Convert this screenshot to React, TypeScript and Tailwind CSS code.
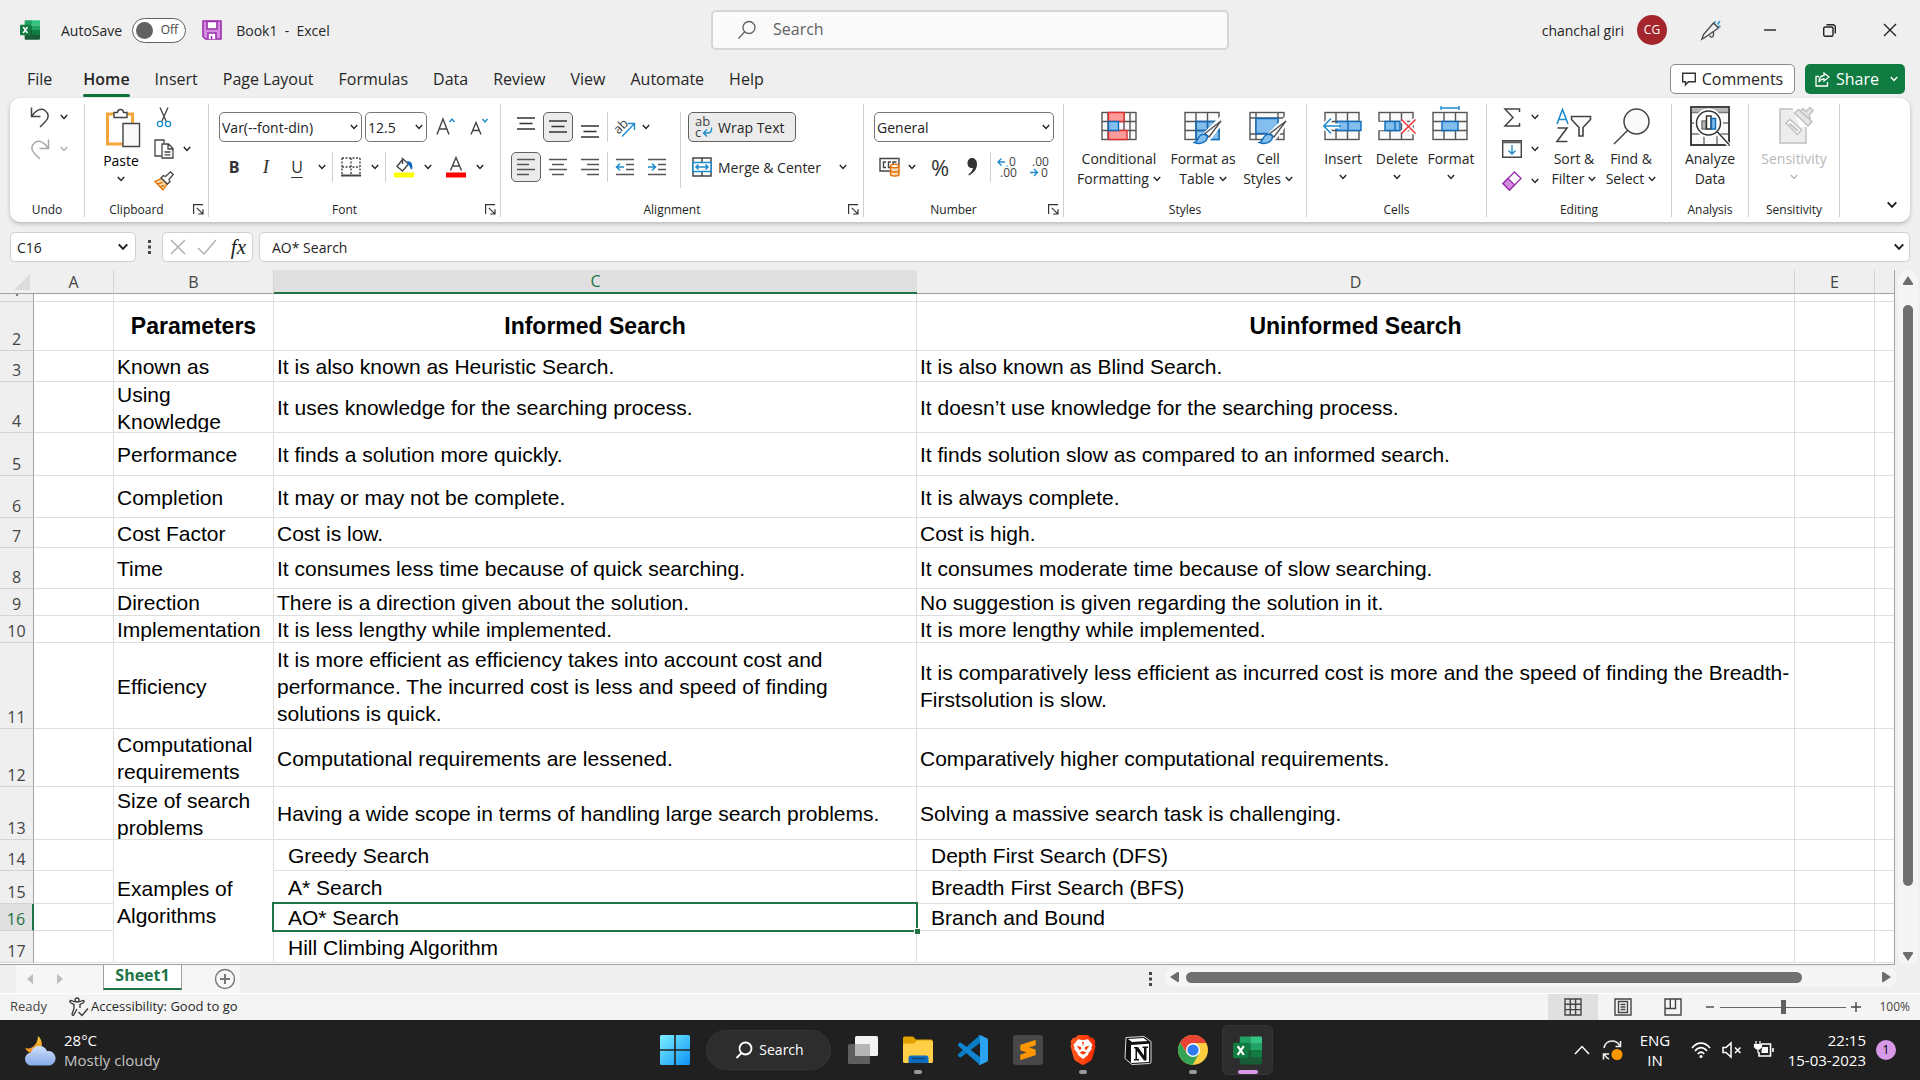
import React from 'react';
import { SiSublimetext } from 'react-icons/si';

type Kids = { children?: React.ReactNode };

const DARK = '#444444';
const BLUE = '#1e8bcd';

function Ic({ w, h, children, sw = 1.4, color = DARK }: { w: number; h: number; sw?: number; color?: string } & Kids) {
  return (
    <svg width={w} height={h} viewBox={`0 0 ${w} ${h}`} fill="none" stroke={color} strokeWidth={sw} className="shrink-0 overflow-visible" aria-hidden="true">
      {children}
    </svg>
  );
}

function Chevron({ color = '#222222', big = false }: { color?: string; big?: boolean }) {
  return (
    <svg width={big ? 12 : 8} height={big ? 8 : 6} viewBox="0 0 8 6" fill="none" stroke={color} strokeWidth={big ? 1.5 : 1.4} className="shrink-0" aria-hidden="true">
      <path d="M.8 1 4 4.4 7.2 1" />
    </svg>
  );
}

function Btn({ label, className = '', children }: { label: string; className?: string } & Kids) {
  return (
    <button type="button" aria-label={label} className={`flex shrink-0 items-center justify-center ${className}`}>
      {children}
    </button>
  );
}

function Drop({ label, color, className = 'w-5 h-[26px]' }: { label: string; color?: string; className?: string }) {
  return (
    <Btn label={label} className={className}>
      <Chevron color={color} />
    </Btn>
  );
}

function Sep({ className = 'h-[30px]' }: { className?: string }) {
  return <div className={`w-px shrink-0 bg-[#d0d0d0] ${className}`} />;
}

function Group({ name, className, launcher = false, children }: { name: string; className: string; launcher?: boolean } & Kids) {
  return (
    <section aria-label={name} className={`relative flex h-[113px] shrink-0 flex-col justify-between border-r border-[#d0d0d0] ${className}`}>
      {children}
      <div className={`h-3.5 text-center text-[12px] leading-[14px] text-[#222222] ${launcher ? 'pr-5' : ''}`}>{name}</div>
      {launcher && (
        <button type="button" aria-label={`${name} settings`} className="absolute right-1 bottom-0.5">
          <Ic w={11} h={11} color="#333333" sw={1.2}>
            <path d="M.6 10V.6H10M3.8 3.8l6 6M10 5.2V10H5.2" />
          </Ic>
        </button>
      )}
    </section>
  );
}

function Combo({ label, value, className }: { label: string; value: string; className: string }) {
  return (
    <div className={`relative h-[30px] shrink-0 ${className}`}>
      <select aria-label={label} className="h-full w-full appearance-none rounded-[5px] border border-[#767676] bg-white pl-0.5 text-[14px] text-[#222222]">
        <option>{value}</option>
      </select>
      <span className="pointer-events-none absolute inset-y-0 right-1 flex items-center">
        <Chevron />
      </span>
    </div>
  );
}

function Big({ icon, lines, chevron, color = '#262626', className, below = false }: { icon: React.ReactNode; lines: string[]; chevron?: boolean; color?: string; className: string; below?: boolean }) {
  return (
    <button type="button" className={`flex shrink-0 flex-col items-center text-[14px] leading-5 ${className}`} style={{ color }}>
      <span className="flex h-[45px] items-start pt-0.5">{icon}</span>
      {lines.map((l, i) => (
        <span key={l} className="flex items-center gap-1 whitespace-nowrap">
          {l}
          {chevron && !below && i === lines.length - 1 && <Chevron color={color} />}
        </span>
      ))}
      {below && (
        <span className="flex h-4 items-center">
          <Chevron color={color} />
        </span>
      )}
    </button>
  );
}

function ExcelIcon({ s }: { s: number }) {
  return (
    <svg width={s} height={s} viewBox="0 0 30 30" className="shrink-0" aria-hidden="true">
      <path d="M7 2a1.5 1.5 0 0 1 1.500-1.500H18v7.500H7z" fill="#21a366" />
      <path d="M18 .5h10.500A1.500 1.500 0 0 1 30 2v6H18z" fill="#33c481" />
      <path d="M7 8h11v7H7z" fill="#107c41" />
      <path d="M18 8h12v7H18z" fill="#21a366" />
      <path d="M18 15h12v7.500H18z" fill="#107c41" />
      <path d="M7 15h11v7.500h12V28a1.500 1.500 0 0 1-1.500 1.500h-20A1.500 1.500 0 0 1 7 28z" fill="#185c37" />
      <rect x="0" y="7" width="16" height="16" rx="1.500" fill="#107c41" />
      <path d="M4.800 10.500 11.200 19.500M11.200 10.500 4.800 19.500" stroke="#fff" strokeWidth="2.200" />
    </svg>
  );
}

function TitleBar() {
  return (
    <header className="grid h-[60px] shrink-0 grid-cols-[1fr_518px_1fr] items-center pl-5">
      <div className="flex items-center text-[14px] text-[#262626]">
        <ExcelIcon s={20} />
        <label htmlFor="autosave" className="ml-[21px]">AutoSave</label>
        <div className="relative ml-2.5 h-[25px] w-[54px]">
          <input id="autosave" type="checkbox" role="switch" className="h-full w-full appearance-none rounded-full border border-[#616161] bg-white" />
          <span className="pointer-events-none absolute top-1 left-1 h-[17px] w-[17px] rounded-full bg-[#616161]" />
          <span className="pointer-events-none absolute inset-y-0 right-2 flex items-center text-[12px] text-[#444444]">Off</span>
        </div>
        <Btn label="Save" className="ml-4">
          <Ic w={20} h={20} color="#9b2fae" sw={1.6}>
            <path d="M1 1h18v18H3.500L1 16.500z" fill="#d48fe0" />
            <path d="M5 1.500h10v7.500H5zM6 19v-6h8v6" fill="#fff" />
            <path d="M9.500 16v3" />
          </Ic>
        </Btn>
        <h1 className="ml-3.5 whitespace-pre">Book1&nbsp; -&nbsp; Excel</h1>
      </div>
      <div className="flex h-10 items-center gap-4 rounded-[5px] border-2 border-[#d6d6d6] bg-[#fafafa] pl-6">
        <Ic w={20} h={20} color="#616161" sw={1.3}>
          <circle cx="12" cy="7.500" r="6" />
          <path d="M7.800 11.800 1.500 18.500" />
        </Ic>
        <input aria-label="Search" placeholder="Search" className="mb-0.5 min-w-0 flex-1 bg-transparent text-[16px] outline-none placeholder:text-[#616161]" />
      </div>
      <div className="flex items-center justify-end pr-6 text-[#262626]">
        <span className="text-[14px]">chanchal giri</span>
        <span className="ml-[13px] flex size-[30px] items-center justify-center rounded-full bg-[#a4262c] text-[12px] text-white">CG</span>
        <Btn label="Coming soon" className="ml-[34px]">
          <Ic w={20} h={20} sw={1.3}>
            <path d="M12.500 3 17.500 8 4.500 17 .8 19.200 2.500 14.500zM8.500 15.500c1 2.500 3.800 2 4-.500v-3" />
            <path d="M14 1v2.500M16.500 4.500 19 1M17 6.500h2.500" stroke={BLUE} />
          </Ic>
        </Btn>
        <Btn label="Minimize" className="ml-[43px]">
          <Ic w={12} h={12} color="#222"><path d="M0 6h12" /></Ic>
        </Btn>
        <Btn label="Restore" className="ml-[47px]">
          <Ic w={13} h={13} color="#222">
            <rect x=".7" y="3" width="9.300" height="9.300" rx="1.500" />
            <path d="M3.500.7h6.300a2.500 2.500 0 0 1 2.500 2.500v6.300" />
          </Ic>
        </Btn>
        <Btn label="Close" className="ml-12">
          <Ic w={12} h={12} color="#222"><path d="m0 0 12 12M12 0 0 12" /></Ic>
        </Btn>
      </div>
    </header>
  );
}

const TABS = ['Insert', 'Page Layout', 'Formulas', 'Data', 'Review', 'View', 'Automate', 'Help'];

function Tabs() {
  return (
    <nav aria-label="Ribbon tabs" className="flex h-[38px] shrink-0 items-center justify-between pr-[15px] pl-[27px] text-[#262626]">
      <div className="flex items-center gap-[25px] text-[16px]">
        <button type="button" className="mr-1.5">File</button>
        <button type="button" className="relative flex h-9 items-center font-semibold">
          Home
          <span className="absolute inset-x-0 bottom-0 h-[3px] rounded-sm bg-[#0f703b]" />
        </button>
        {TABS.map((t) => (
          <button type="button" key={t}>{t}</button>
        ))}
      </div>
      <div className="flex gap-2.5 text-[16px]">
        <button type="button" className="flex h-[30px] w-[125px] items-center justify-center gap-1.5 rounded-[5px] border border-[#8a8a8a] bg-white">
          <Ic w={14} h={14} color="#333"><path d="M.7 1.200h12.600v8.500H6.500l-3 3v-3H.7z" /></Ic>
          Comments
        </button>
        <div className="flex h-[30px] rounded-[5px] bg-[#107c41] text-white">
          <button type="button" className="flex items-center gap-1.5 pl-2.5">
            <Ic w={15} h={15} color="#fff" sw={1.3}>
              <path d="M4 4.500H1v9.500h11.500v-4" />
              <path d="M9 1l5 4-5 4V6.800C6.500 6.800 5 8 4 10c0-4 2-6.300 5-6.500z" />
            </Ic>
            Share
          </button>
          <Drop label="Share options" color="#ffffff" className="ml-1 h-[30px] w-[22px]" />
        </div>
      </div>
    </nav>
  );
}

function Lines({ rows, color = '#555555' }: { rows: [number, number][]; color?: string }) {
  return (
    <Ic w={20} h={20} color={color} sw={1.5}>
      {rows.map(([x, w], i) => (
        <path key={i} d={`M${x} ${2.5 + i * 5}h${w}`} />
      ))}
    </Ic>
  );
}

function VLines({ dy }: { dy: number }) {
  return (
    <Ic w={20} h={30} color="#333333" sw={1.5}>
      <path d={`M1 ${dy}h18M3.500 ${dy + 5.5}h13M1 ${dy + 11}h18`} />
    </Ic>
  );
}

function TableGrid({ children, fill }: { fill?: React.ReactNode } & Kids) {
  return (
    <Ic w={40} h={40} color="#555555">
      <rect x="2" y="6.500" width="34" height="27" fill="#fafafa" />
      {fill}
      <path d="M2 15.500h34M2 24.500h34M13 6.500v27M24.500 6.500v27" />
      {children}
    </Ic>
  );
}

function Brush() {
  return (
    <>
      <path d="M37 14 22 29l3 4L38 16z" stroke="#fff" strokeWidth="5" />
      <path d="M38 15 26 31l-4-3.500z" fill="#fff" />
      <path d="M24.500 30c0 6-6.500 9-13 6.500 3.500-1 3-5.500 6.500-7.500 2.500-1.500 5-.5 6.500 1z" fill="#83beec" stroke="#0f6cbd" />
    </>
  );
}

function Ribbon() {
  return (
    <div className="mx-2.5 flex h-[124px] shrink-0 justify-between rounded-[10px] bg-white pt-1.5 shadow-[0_2px_4px_rgba(0,0,0,0.22)]">
      <div className="flex">
        <Group name="Undo" className="w-[75px]">
          <div className="ml-5 flex flex-col gap-1.5">
            <div className="flex">
              <Btn label="Undo" className="h-[26px]">
                <Ic w={20} h={22} sw={1.5}><path d="M1.500 1.500v9h9M2 10C6 4 11 1.500 15 4.500s4.500 7 0 11.500l-5 5" /></Ic>
              </Btn>
              <Drop label="Undo history" className="ml-1 h-[26px] w-5" />
            </div>
            <div className="flex">
              <Btn label="Redo" className="h-[26px]">
                <Ic w={20} h={22} sw={1.5} color="#a8a8a8"><path d="M18.500 1.500v9h-9M18 10C14 4 9 1.500 5 4.500S.5 11.500 5 16l5 5" /></Ic>
              </Btn>
              <Drop label="Redo history" color="#b0b0b0" className="ml-1 h-[26px] w-5" />
            </div>
          </div>
        </Group>

        <Group name="Clipboard" launcher className="w-[124px]">
          <div className="flex pl-4">
            <button type="button" className="flex w-10 flex-col items-center text-[14px] leading-5">
              <span className="flex h-[47px] items-start pt-1 pl-1">
                <Ic w={36} h={39}>
                  <path d="M2.500 6h25v30h-25z" fill="#fff" stroke="#f4a63a" strokeWidth="3" />
                  <path d="M9 9.500V4.500h3.500a3 3 0 0 1 6 0H22v5z" fill="#fff" />
                  <path d="M18 15.500h16.500v23H18z" fill="#fafafa" />
                </Ic>
              </span>
              Paste
              <span className="flex h-4 items-center"><Chevron /></span>
            </button>
            <div className="ml-3 flex flex-col gap-1.5">
              <Btn label="Cut" className="h-[26px] w-[22px]">
                <Ic w={16} h={21} sw={1.3}>
                  <path d="M4 .5 10.500 15M12 .5 5.500 15" />
                  <circle cx="4" cy="17" r="2.600" stroke={BLUE} />
                  <circle cx="12" cy="17" r="2.600" stroke={BLUE} />
                </Ic>
              </Btn>
              <div className="flex">
                <Btn label="Copy" className="h-[26px] w-[22px]">
                  <Ic w={20} h={20} sw={1.3}>
                    <path d="M7.500 17H1V1h9v3" />
                    <path d="M8 5h6.500l4.500 4.500V19H8zM14 5v5h5M10.500 13h6M10.500 15.800h6" fill="#fff" />
                  </Ic>
                </Btn>
                <Drop label="Copy options" className="ml-0.5 h-[26px] w-5" />
              </div>
              <Btn label="Format painter" className="h-[26px] w-[22px]">
                <Ic w={20} h={20} sw={1.3}>
                  <path d="M7.500 7.500 13 13l-4 6L1 10.500z" fill="#f8d9a8" stroke="#e07000" />
                  <path d="M3.500 12.500c2 .5 4-1 5-1M6 15.500c2 .5 3-1 4-1" stroke="#e07000" />
                  <path d="M7 7l2.500-2.500 2 1L16.500.8 19.200 3.500 15 8.500l1 2L13.500 13z" fill="#fff" />
                </Ic>
              </Btn>
            </div>
          </div>
        </Group>

        <Group name="Font" launcher className="w-[292px]">
          <div className="flex flex-col gap-2.5 pt-2">
            <div className="flex items-center gap-[3px] pl-2.5">
              <Combo label="Font" value="Var(--font-din)" className="w-[143px]" />
              <Combo label="Font size" value="12.5" className="w-[62px]" />
              <Btn label="Increase font size" className="ml-1 w-6">
                <Ic w={20} h={20}><path d="M1 17.500 7 2l6 15.500M3.200 12h7.600" /><path d="M13.500 5 16 2l2.500 3" stroke={BLUE} /></Ic>
              </Btn>
              <Btn label="Decrease font size" className="ml-1.5 w-6">
                <Ic w={20} h={20}><path d="M2 17.500 7 5.500l5 12M3.800 13.500h6.400" /><path d="M13.500 2 16 5l2.500-3" stroke={BLUE} /></Ic>
              </Btn>
            </div>
            <div className="flex items-center pl-[9px] text-[16px] text-[#333333]">
              <Btn label="Bold" className="h-[30px] w-8 font-bold">B</Btn>
              <Btn label="Italic" className="h-[30px] w-8 font-['Liberation_Serif'] text-[19px] italic">I</Btn>
              <Btn label="Underline" className="h-[30px] w-[30px] underline underline-offset-4">U</Btn>
              <Drop label="Underline options" />
              <Sep className="mr-1 h-[30px]" />
              <Btn label="Borders" className="w-7">
                <Ic w={20} h={20} sw={1.4}>
                  <path d="M1 1h18M1 10h18M1 1v16M10 1v16M19 1v16" strokeDasharray="2 1.500" />
                  <path d="M0 18.500h20" strokeWidth="2" />
                </Ic>
              </Btn>
              <Drop label="Border options" />
              <Sep className="mr-1 h-[30px]" />
              <Btn label="Fill colour" className="w-7">
                <Ic w={20} h={22} sw={1.4}>
                  <path d="M9 3 3 10.500l5.500 4.500L14.500 8 8.500 2.500V8" />
                  <path d="M14 6c3 0 4 2 3.500 7-1-3-1.500-4-3-5z" fill="#0f6cbd" stroke="#0f6cbd" />
                  <path d="M0 19h20" stroke="#ffff00" strokeWidth="5" />
                </Ic>
              </Btn>
              <Drop label="Fill options" />
              <Btn label="Font colour" className="ml-1 w-7">
                <Ic w={20} h={22} sw={1.4}>
                  <path d="M4.500 14.500 10 1.500l5.500 13M6.500 10h7" />
                  <path d="M0 19h20" stroke="#ff0000" strokeWidth="5" />
                </Ic>
              </Btn>
              <Drop label="Font colour options" />
            </div>
          </div>
        </Group>

        <Group name="Alignment" launcher className="w-[363px]">
          <div className="flex pt-2 pl-2.5">
            <div className="flex flex-col gap-2.5">
              <div className="flex gap-0.5">
                <Btn label="Top align" className="h-[30px] w-[30px]"><VLines dy={6} /></Btn>
                <Btn label="Middle align" className="h-[30px] w-[30px] rounded-[5px] border border-[#616161] bg-[#ebebeb]"><VLines dy={9} /></Btn>
                <Btn label="Bottom align" className="h-[30px] w-[30px]"><VLines dy={14} /></Btn>
                <Sep />
                <Btn label="Orientation" className="h-[30px] w-[30px]">
                  <Ic w={21} h={21} sw={1.4}>
                    <text x="-1" y="13" fontSize="13" fontFamily="Open Sans" fill={DARK} stroke="none" transform="rotate(-45 7 10)">ab</text>
                    <path d="M7 19.500 19 7M13 6.500h6.500V13" stroke={BLUE} />
                  </Ic>
                </Btn>
                <Drop label="Orientation options" className="h-[30px] w-2" />
              </div>
              <div className="flex gap-0.5">
                <Btn label="Align left" className="h-[30px] w-[30px] rounded-[5px] border border-[#616161] bg-[#ebebeb]"><Lines rows={[[1, 18], [1, 12], [1, 18], [1, 12]]} /></Btn>
                <Btn label="Align centre" className="h-[30px] w-[30px]"><Lines rows={[[1, 18], [4, 12], [1, 18], [4, 12]]} /></Btn>
                <Btn label="Align right" className="h-[30px] w-[30px]"><Lines rows={[[1, 18], [7, 12], [1, 18], [7, 12]]} /></Btn>
                <Sep />
                <Btn label="Decrease indent" className="h-[30px] w-[30px]">
                  <Ic w={20} h={20} sw={1.5}>
                    <path d="M1 2.500h18M11 7.500h8M11 12.500h8M1 17.500h18" stroke="#555" />
                    <path d="M9 10H1.500M5 6.500 1.500 10 5 13.500" stroke={BLUE} />
                  </Ic>
                </Btn>
                <Btn label="Increase indent" className="h-[30px] w-[30px]">
                  <Ic w={20} h={20} sw={1.5}>
                    <path d="M1 2.500h18M11 7.500h8M11 12.500h8M1 17.500h18" stroke="#555" />
                    <path d="M1 10h7.500M5 6.500 8.500 10 5 13.500" stroke={BLUE} />
                  </Ic>
                </Btn>
              </div>
            </div>
            <Sep className="ml-2 h-[76px]" />
            <div className="ml-[7px] flex flex-col gap-2.5 text-[14px] text-[#262626]">
              <button type="button" className="flex h-[30px] w-[108px] items-center gap-1 rounded-[5px] border border-[#616161] bg-[#ebebeb] pl-1.5 whitespace-nowrap">
                <Ic w={19} h={22}>
                  <text x="0" y="10" fontSize="13" fontFamily="Open Sans" fill={DARK} stroke="none">ab</text>
                  <text x="0" y="21" fontSize="13" fontFamily="Open Sans" fill={DARK} stroke="none">c</text>
                  <path d="M16.500 11.500c.5 4-1 5.500-4 5.500H8.500M12 13.500 8.500 17l3.500 3.500" stroke={BLUE} />
                </Ic>
                Wrap Text
              </button>
              <div className="flex items-center">
                <button type="button" className="flex h-[30px] items-center gap-1.5 pl-1 whitespace-nowrap">
                  <Ic w={20} h={20} sw={1.5}>
                    <path d="M1 1h18v18H1zM10 1v4M10 15v4" />
                    <path d="M1 5.500h18v9H1z" fill="#fff" stroke={BLUE} />
                    <path d="M4 10h12M6.500 7.500 4 10l2.500 2.500M13.500 7.500 16 10l-2.500 2.500" stroke={BLUE} />
                  </Ic>
                  Merge &amp; Center
                </button>
                <Drop label="Merge options" className="ml-3 h-[30px] w-5" />
              </div>
            </div>
          </div>
        </Group>

        <Group name="Number" launcher className="w-[200px]">
          <div className="flex flex-col gap-2.5 pt-2 pl-2.5">
            <Combo label="Number format" value="General" className="w-[180px]" />
            <div className="flex items-center text-[#333333]">
              <Btn label="Accounting format" className="h-[30px] w-8">
                <Ic w={22} h={20}>
                  <path d="M11 14H1V1.500h19V8M7 5H4.500v5.500H7M12 5H9.500v5.500h1.500M14 8V5h3.500" />
                  <path d="M11.500 9v8.500c0 2 8.500 2 8.500 0V9" fill="#fbd9b5" stroke="#e07000" />
                  <ellipse cx="15.800" cy="9" rx="4.200" ry="1.800" fill="#fff" stroke="#e07000" />
                  <path d="M11.500 13.500c0 2 8.500 2 8.500 0" stroke="#e07000" />
                </Ic>
              </Btn>
              <Drop label="Accounting options" className="h-[30px] w-3" />
              <Btn label="Percent" className="ml-1.5 h-[30px] w-8 text-[22px]">%</Btn>
              <Btn label="Comma style" className="h-[30px] w-8">
                <svg width="12" height="18" viewBox="0 0 12 18" aria-hidden="true"><path d="M6 0c3 0 5 2.500 5 6 0 5-3 9-8 11.500l-.7-1C5 14.500 6.500 12.500 7 10 3.500 10.500 1.500 8 1.500 5.200 1.500 2 3.500 0 6 0z" fill="#333" /></svg>
              </Btn>
              <Sep className="ml-0.5 h-[30px]" />
              <Btn label="Increase decimal" className="h-[30px] w-8">
                <Ic w={20} h={22}>
                  <text x="12" y="10" fontSize="12" fontFamily="Open Sans" fill={DARK} stroke="none">0</text>
                  <text x="3" y="21" fontSize="12" fontFamily="Open Sans" fill={DARK} stroke="none">.00</text>
                  <path d="M8 6H1M4.500 2.500 1 6l3.500 3.500M10 9.500v1" stroke={BLUE} />
                </Ic>
              </Btn>
              <Btn label="Decrease decimal" className="h-[30px] w-8">
                <Ic w={20} h={22}>
                  <text x="3" y="10" fontSize="12" fontFamily="Open Sans" fill={DARK} stroke="none">.00</text>
                  <text x="12" y="21" fontSize="12" fontFamily="Open Sans" fill={DARK} stroke="none">0</text>
                  <path d="M1 16.500h7.500M5 13l3.500 3.500L5 20" stroke={BLUE} />
                </Ic>
              </Btn>
            </div>
          </div>
        </Group>

        <Group name="Styles" className="w-[243px]">
          <div className="flex pl-2.5">
            <Big className="w-[90px]" lines={['Conditional', 'Formatting']} chevron icon={
              <Ic w={40} h={40} color="#555555">
                <rect x="3" y="6.500" width="34" height="27" fill="#fafafa" />
                <path d="M3 15.500h34M3 24.500h34M9 6.500v27M31 6.500v27M25 6.500v27" />
                <path d="M9.500 6.500H25v9H9.500zM9.500 24.500H28v9H9.500z" fill="#ff9a9a" stroke="#e03030" />
                <path d="M9.500 15.500h10v9h-10z" fill="#83beec" stroke="#0f6cbd" />
              </Ic>
            } />
            <Big className="w-[78px]" lines={['Format as', 'Table']} chevron icon={
              <TableGrid fill={<path d="M13 15.500h23v18H13z" fill="#83beec" stroke="none" />}>
                <path d="M13 15.500h23v18H13zM24.500 15.500v18M13 24.500h23" stroke="#0f6cbd" />
                <Brush />
              </TableGrid>
            } />
            <Big className="w-[52px]" lines={['Cell', 'Styles']} chevron icon={
              <Ic w={40} h={40} color="#555555">
                <rect x="2" y="6.500" width="34" height="27" fill="#fafafa" />
                <path d="M2 12h34M2 28h34M8 6.500v27M30 6.500v27" />
                <path d="M8 12.500h22v15H8z" fill="#83beec" stroke="#0f6cbd" />
                <Brush />
              </Ic>
            } />
          </div>
        </Group>

        <Group name="Cells" className="w-[180px]">
          <div className="flex pl-[9px]">
            <Big className="w-[54px]" lines={['Insert']} chevron below icon={
              <TableGrid>
                <path d="M14 15.500h24v9H14z" fill="#83beec" stroke="#0f6cbd" />
                <path d="M25 15.500v9" stroke="#0f6cbd" />
                <path d="M16 20H1M8 12.500.8 20 8 27.500" stroke="#fff" strokeWidth="5" />
                <path d="M18 20H1M8 12.500.8 20 8 27.500" stroke={BLUE} strokeWidth="1.600" />
              </TableGrid>
            } />
            <Big className="w-[54px]" lines={['Delete']} chevron below icon={
              <TableGrid>
                <path d="M1 16.500h6v7H1z" fill="#fff" stroke="#fff" />
                <path d="M8 15.500h15v9H8z" fill="#83beec" stroke="#0f6cbd" />
                <path d="M18 15.500v9" stroke="#0f6cbd" />
                <path d="m25 14 13 13M38 14 25 27" stroke="#fff" strokeWidth="5" />
                <path d="m24.500 13.500 14 14M38.500 13.500l-14 14" stroke="#ee3b3b" strokeWidth="1.600" />
              </TableGrid>
            } />
            <Big className="w-[54px]" lines={['Format']} chevron below icon={
              <TableGrid>
                <path d="M11 15.500h16v9H11z" fill="#83beec" stroke="#0f6cbd" />
                <path d="M10 2h18M10 0v4M28 0v4" stroke={BLUE} />
              </TableGrid>
            } />
          </div>
        </Group>

        <Group name="Editing" className="w-[185px]">
          <div className="flex pl-[15px]">
            <div className="flex flex-col gap-1.5">
              <div className="flex">
                <Btn label="AutoSum" className="h-[26px] w-5"><Ic w={18} h={19} sw={1.5}><path d="M16.500 4V1H2l8 8.500-8 8.500h14.500v-3" /></Ic></Btn>
                <Drop label="AutoSum options" className="ml-[3px] h-[26px] w-5" />
              </div>
              <div className="flex">
                <Btn label="Fill" className="h-[26px] w-5"><Ic w={20} h={18}><path d="M.7.7h18.600v16.600H.7z" fill="#fff" /><path d="M.7 2h18.600" strokeWidth="2.600" stroke="#666" /><path d="M10 5v9M6.500 10.500 10 14l3.500-3.500" stroke={BLUE} /></Ic></Btn>
                <Drop label="Fill series options" className="ml-[3px] h-[26px] w-5" />
              </div>
              <div className="flex">
                <Btn label="Clear" className="h-[26px] w-5">
                  <Ic w={20} h={20} color="#9b2fae">
                    <path d="M12.500 1 19 7.500 7.500 19 1 12.500z" fill="#fff" />
                    <path d="M6 7.500 12.500 14l-5 5L1 12.500z" fill="#d48fe0" />
                  </Ic>
                </Btn>
                <Drop label="Clear options" className="ml-[3px] h-[26px] w-5" />
              </div>
            </div>
            <Big className="ml-px w-14" lines={['Sort &', 'Filter']} chevron icon={
              <Ic w={38} h={40} sw={1.6}>
                <path d="M2 18 7.500 3.500 13 18M4 13.500h7" stroke={BLUE} />
                <path d="M2.500 22H12L2 35.500h10.500" />
                <path d="M16.500 10.500h19v3L28 21.500v8.500h-4v-8.500l-7.500-8z" fill="#fafafa" />
              </Ic>
            } />
            <Big className="w-[58px]" lines={['Find &', 'Select']} chevron icon={
              <Ic w={40} h={40} sw={1.5}>
                <circle cx="25.500" cy="15.500" r="12.500" fill="#fafafa" />
                <path d="M16.500 24.500 3 38" />
              </Ic>
            } />
          </div>
        </Group>

        <Group name="Analysis" className="w-[77px]">
          <div className="flex justify-center">
            <Big className="w-16" lines={['Analyze', 'Data']} icon={
              <Ic w={40} h={40} sw={1.5} color="#333333">
                <rect x="1" y="1" width="38" height="38" fill="#fafafa" />
                <path d="M1 4h38" strokeWidth="5" stroke="#b8b8b8" />
                <path d="M1 6.500h38M1 17h38M1 28h38M14 28v11M27 28v11" stroke="#777" />
                <rect x="1" y="1" width="38" height="38" />
                <path d="M27 27 39 39" stroke="#fff" strokeWidth="4" />
                <circle cx="18.500" cy="17" r="12" fill="#fff" stroke="#fff" strokeWidth="5" />
                <circle cx="18.500" cy="17" r="12" />
                <path d="M27 25.500 39 38.500" />
                <path d="M12 15h4v8h-4z" fill="#b8b8b8" stroke="#777" />
                <path d="M16.500 10H21v13h-4.500z" fill="#fff" />
                <path d="M21.500 12.500h4V23h-4z" fill="#83beec" stroke="#0f6cbd" />
              </Ic>
            } />
          </div>
        </Group>

        <Group name="Sensitivity" className="w-[91px]">
          <div className="flex justify-center">
            <Big className="w-[78px]" lines={['Sensitivity']} chevron below color="#b8b8b8" icon={
              <Ic w={40} h={40} color="#c0c0c0" sw={1.5}>
                <path d="M6 3h26v34H6z" fill="#ededed" />
                <path d="M18 1h22v20H26z" fill="#fff" stroke="none" />
                <path d="m12 17 4-3.500 11.500 10.500-4 4.500z" fill="#fff" />
                <path d="m15.500 17.500 8.500 7.500" strokeWidth="2" />
                <path d="m20.500 7 4-3.500 13.500 12-4 4.500zM26 5.500l3-3 3 3 4-4 3 3-4 5 1.500 3.500" fill="#e4e4e4" />
              </Ic>
            } />
          </div>
        </Group>
      </div>
      <Btn label="Collapse ribbon" className="mr-3 mb-[13px] self-end"><Chevron big /></Btn>
    </div>
  );
}

function Dots() {
  return (
    <svg width="3" height="14" viewBox="0 0 3 14" className="shrink-0" aria-hidden="true"><path d="M0 0h3v3H0zM0 5.500h3v3H0zM0 11h3v3H0z" fill="#444" /></svg>
  );
}

function FormulaBar() {
  const box = 'flex h-[30px] items-center rounded-[5px] border border-[#d0d0d0] bg-white';
  return (
    <div className="mx-2.5 mt-2.5 mb-2 flex shrink-0 items-center text-[14px] text-[#222222]">
      <div className={`${box} w-[126px] pr-1.5 pl-1.5`}>
        <input aria-label="Name box" defaultValue="C16" className="min-w-0 flex-1 outline-none" />
        <Btn label="Name list"><Chevron big /></Btn>
      </div>
      <div className="flex w-[26px] justify-center"><Dots /></div>
      <div className={`${box} w-[91px] justify-between pr-1.5 pl-2`}>
        <Btn label="Cancel"><Ic w={15} h={16} color="#b0b0b0" sw={1.5}><path d="m0 1 14 14M14 1 0 15" /></Ic></Btn>
        <Btn label="Enter"><Ic w={20} h={16} color="#b0b0b0" sw={1.5}><path d="m0 9 6 6L18 1" /></Ic></Btn>
        <Btn label="Insert function" className="font-['Liberation_Serif'] text-[21px] leading-none font-bold italic"><span className="font-normal">fx</span></Btn>
      </div>
      <div className={`${box} ml-1.5 flex-1 pr-1 pl-3`}>
        <input aria-label="Formula bar" defaultValue="AO* Search" className="min-w-0 flex-1 outline-none" />
        <Btn label="Expand formula bar"><Chevron big /></Btn>
      </div>
    </div>
  );
}

type Row = { n: number; h: string; b?: string; c?: string; d?: string };

const ROWS: Row[] = [
  { n: 1, h: 'h-[7px]' },
  { n: 2, h: 'h-[48px]', b: 'Parameters', c: 'Informed Search', d: 'Uninformed Search' },
  { n: 3, h: 'h-[30px]', b: 'Known as', c: 'It is also known as Heuristic Search.', d: 'It is also known as Blind Search.' },
  { n: 4, h: 'h-[50px]', b: 'Using\nKnowledge', c: 'It uses knowledge for the searching process.', d: 'It doesn’t use knowledge for the searching process.' },
  { n: 5, h: 'h-[42px]', b: 'Performance', c: 'It finds a solution more quickly.', d: 'It finds solution slow as compared to an informed search.' },
  { n: 6, h: 'h-[41px]', b: 'Completion', c: 'It may or may not be complete.', d: 'It is always complete.' },
  { n: 7, h: 'h-[29px]', b: 'Cost Factor', c: 'Cost is low.', d: 'Cost is high.' },
  { n: 8, h: 'h-[40px]', b: 'Time', c: 'It consumes less time because of quick searching.', d: 'It consumes moderate time because of slow searching.' },
  { n: 9, h: 'h-[26px]', b: 'Direction', c: 'There is a direction given about the solution.', d: 'No suggestion is given regarding the solution in it.' },
  { n: 10, h: 'h-[26px]', b: 'Implementation', c: 'It is less lengthy while implemented.', d: 'It is more lengthy while implemented.' },
  { n: 11, h: 'h-[85px]', b: 'Efficiency', c: 'It is more efficient as efficiency takes into account cost and\nperformance. The incurred cost is less and speed of finding\nsolutions is quick.', d: 'It is comparatively less efficient as incurred cost is more and the speed of finding the Breadth-\nFirstsolution is slow.' },
  { n: 12, h: 'h-[57px]', b: 'Computational\nrequirements', c: 'Computational requirements are lessened.', d: 'Comparatively higher computational requirements.' },
  { n: 13, h: 'h-[52px]', b: 'Size of search\nproblems', c: 'Having a wide scope in terms of handling large search problems.', d: 'Solving a massive search task is challenging.' },
  { n: 14, h: 'h-[30px]', b: 'Examples of\nAlgorithms', c: 'Greedy Search', d: 'Depth First Search (DFS)' },
  { n: 15, h: 'h-[32px]', c: 'A* Search', d: 'Breadth First Search (BFS)' },
  { n: 16, h: 'h-[26px]', c: 'AO* Search', d: 'Branch and Bound' },
  { n: 17, h: 'h-[31px]', c: 'Hill Climbing Algorithm' },
];

const CELL = 'border-r border-b border-[#dedede] p-0';

function Cell({ row, text = '' }: { row: Row; text?: string }) {
  const head = row.n === 2;
  const look = head ? 'justify-center text-[23px] font-bold' : row.n > 13 ? 'pl-3.5' : 'pl-[3px]';
  return <div className={`flex items-center overflow-hidden pt-px whitespace-pre ${row.h} ${look}`}>{text}</div>;
}

function Grid() {
  return (
    <div className="flex min-h-0 flex-1">
      <div className="min-w-0 flex-1 overflow-hidden border-r border-b border-[#a0a0a0] bg-white">
        <table className="w-full table-fixed border-separate border-spacing-0 font-['Liberation_Sans',sans-serif] text-[21px] leading-[27px] text-black">
          <colgroup>
            <col className="w-[34px]" />
            <col className="w-20" />
            <col className="w-40" />
            <col className="w-[643px]" />
            <col className="w-[878px]" />
            <col className="w-20" />
            <col />
          </colgroup>
          <thead>
            <tr className="h-6 font-['Open_Sans',sans-serif] text-[16px] leading-5 text-[#444444]">
              <th aria-label="Select all" className="border-b border-[#a0a0a0] bg-[#efefef] p-0">
                <svg width="16" height="16" viewBox="0 0 16 16" className="ml-3.5" aria-hidden="true"><path d="M16 0v16H0z" fill="#dcdcdc" /></svg>
              </th>
              {['A', 'B', 'C', 'D', 'E', ''].map((c) => (
                <th key={c} scope="col" className={`p-0 font-normal ${c === 'C' ? 'border-b-2 border-[#217346] bg-[#e0e0e0] text-[#217346]' : c === '' ? 'border-b border-b-[#a0a0a0] bg-[#efefef]' : 'border-r border-b border-r-[#d4d4d4] border-b-[#a0a0a0] bg-[#efefef]'}`}>
                  {c}
                </th>
              ))}
            </tr>
          </thead>
          <tbody>
            {ROWS.map((r) => {
              const sel = r.n === 16;
              return (
                <tr key={r.n}>
                  <th scope="row" className={`border-b border-b-[#d4d4d4] p-0 font-['Open_Sans',sans-serif] text-[16px] leading-5 font-normal ${sel ? 'border-r-2 border-r-[#217346] bg-[#e0e0e0] text-[#217346]' : 'border-r border-r-[#a0a0a0] bg-[#efefef] text-[#444444]'}`}>
                    <div className={`flex items-end justify-center overflow-hidden pb-px ${r.h}`}>{r.n}</div>
                  </th>
                  <td className={CELL} />
                  {r.n <= 13 && <td className={CELL}><Cell row={r} text={r.b} /></td>}
                  {r.n === 14 && <td rowSpan={4} className="border-r border-b border-[#dedede] p-0 pt-0.5 pl-[3px] whitespace-pre">{r.b}</td>}
                  <td className={`${CELL} ${sel ? 'relative' : ''}`}>
                    <Cell row={r} text={r.c} />
                    {sel && (
                      <div className="pointer-events-none absolute -inset-0.5 border-2 border-[#217346]">
                        <span className="absolute -right-1 -bottom-1 size-1.5 border-t border-l border-white bg-[#217346]" />
                      </div>
                    )}
                  </td>
                  <td className={CELL}><Cell row={r} text={r.d} /></td>
                  <td className={CELL} />
                  <td className="border-b border-[#dedede] p-0" />
                </tr>
              );
            })}
          </tbody>
        </table>
      </div>
      <div className="mr-0.5 ml-[3px] flex w-5 flex-col items-center rounded-full bg-[#f5f5f5] pt-1.5 pb-1">
        <Btn label="Scroll up"><svg width="12" height="9" viewBox="0 0 12 9" aria-hidden="true"><path d="M6 0l5 7.500q.5 1.500-1 1.500H2Q.5 9 1 7.500z" fill="#6e6e6e" /></svg></Btn>
        <div className="mt-5 w-2.5 grow-[580] basis-0 rounded-full bg-[#707070]" />
        <div className="grow-[66] basis-0" />
        <Btn label="Scroll down"><svg width="12" height="9" viewBox="0 0 12 9" aria-hidden="true"><path d="M6 9l5-7.500Q11.500 0 10 0H2Q.5 0 1 1.500z" fill="#6e6e6e" /></svg></Btn>
      </div>
    </div>
  );
}

function SheetTabs() {
  return (
    <div className="flex h-7 shrink-0 justify-between pr-[23px] pl-4">
      <div className="flex w-56 items-start bg-[#f6f6f6]">
        <div className="ml-[11px] flex h-7 w-[76px] items-center gap-6">
          <Btn label="Previous sheet"><svg width="6" height="10" viewBox="0 0 6 10" aria-hidden="true"><path d="M6 0v10L0 5z" fill="#bdbdbd" /></svg></Btn>
          <Btn label="Next sheet"><svg width="6" height="10" viewBox="0 0 6 10" aria-hidden="true"><path d="M0 0v10l6-5z" fill="#bdbdbd" /></svg></Btn>
        </div>
        <button type="button" className="flex h-[25px] w-[79px] items-center justify-center border-x border-b-2 border-x-[#a0a0a0] border-b-[#217346] bg-white pb-1 text-[16px] leading-5 font-bold text-[#217346]">Sheet1</button>
        <Btn label="New sheet" className="ml-8 h-7">
          <Ic w={22} h={22} color="#777" sw={1.4}><circle cx="11" cy="11" r="9.500" /><path d="M11 6v10M6 11h10" strokeWidth="2" /></Ic>
        </Btn>
      </div>
      <div className="flex w-[748px] items-center">
        <Dots />
        <div className="mt-0.5 ml-3 flex h-5 flex-1 items-center self-start rounded-full bg-[#f5f5f5] pr-1.5 pl-1.5">
          <Btn label="Scroll left"><svg width="9" height="12" viewBox="0 0 9 12" aria-hidden="true"><path d="M0 6l7.500-5Q9 .5 9 2v8q0 1.500-1.500 1z" fill="#6e6e6e" /></svg></Btn>
          <div className="ml-[7px] h-[11px] grow-[616] basis-0 rounded-full bg-[#707070]" />
          <div className="grow-[80] basis-0" />
          <Btn label="Scroll right"><svg width="9" height="12" viewBox="0 0 9 12" aria-hidden="true"><path d="M9 6 1.500 1Q0 .5 0 2v8q0 1.500 1.500 1z" fill="#6e6e6e" /></svg></Btn>
        </div>
      </div>
    </div>
  );
}

function StatusBar() {
  return (
    <footer className="flex h-[27px] shrink-0 items-center justify-between border-t border-white bg-[#f4f4f4] pr-2.5 pl-2.5 text-[13px] text-[#444444]">
      <div className="flex items-center">
        <span>Ready</span>
        <button type="button" className="ml-[22px] flex items-center gap-0.5 text-[#262626]">
          <Ic w={20} h={20} color="#333" sw={1.3}>
            <circle cx="8" cy="3" r="2" />
            <path d="M6 5 2 3.500C.5 3.500.5 5.500 2 6l3 1.500v4L3 17c0 1.500 1.500 1.800 2 .5L8 12M10 5l4-1.500c1.500 0 1.500 2 0 2.500l-3 1.500V11" />
            <path d="m9.500 15 3.500 3.500 6-7" />
          </Ic>
          Accessibility: Good to go
        </button>
      </div>
      <div className="flex items-center">
        <Btn label="Normal view" className="h-[26px] w-[50px] bg-[#e0e0e0]"><Ic w={18} h={18}><path d="M1 1h16v16H1zM1 6.300h16M1 11.600h16M6.300 1v16M11.600 1v16" /></Ic></Btn>
        <Btn label="Page layout view" className="h-[26px] w-[50px]"><Ic w={18} h={18}><path d="M1 1h16v16H1zM4.500 3.500h9v11h-9zM6.500 6.500h5M6.500 9h5M6.500 11.500h5" /></Ic></Btn>
        <Btn label="Page break view" className="h-[26px] w-[50px]"><Ic w={18} h={18}><path d="M1 1h16v16H1zM1 10.500h10.500V1M6.300 1v9.500" /></Ic></Btn>
        <Btn label="Zoom out" className="ml-1.5 w-3"><Ic w={10} h={10}><path d="M1 5h8" /></Ic></Btn>
        <input
          type="range"
          aria-label="Zoom"
          min={0}
          max={100}
          defaultValue={50}
          className="mx-1 h-4 w-[126px] appearance-none bg-[linear-gradient(#666,#666)] bg-[length:100%_1px] bg-center bg-no-repeat [&::-webkit-slider-thumb]:h-3.5 [&::-webkit-slider-thumb]:w-[5px] [&::-webkit-slider-thumb]:appearance-none [&::-webkit-slider-thumb]:bg-[#616161]"
        />
        <Btn label="Zoom in" className="w-3"><Ic w={10} h={10}><path d="M0 5h10M5 0v10" /></Ic></Btn>
        <span className="ml-4 w-8 text-right text-[12px]">100%</span>
      </div>
    </footer>
  );
}

function Task({ label, children, dot, active }: { label: string; dot?: boolean; active?: boolean } & Kids) {
  return (
    <button type="button" aria-label={label} className="relative flex h-[60px] w-[55px] items-center justify-center">
      {active && <span className="absolute inset-x-0.5 inset-y-[5px] rounded-md border border-[#363636] bg-[#2d2d2d]" />}
      <span className="relative">{children}</span>
      {dot && <span className="absolute bottom-1.5 h-1 w-2 rounded-full bg-[#9a9a9a]" />}
      {active && <span className="absolute bottom-1.5 h-1 w-5 rounded-full bg-[#d89ae8]" />}
    </button>
  );
}

function Taskbar() {
  return (
    <div className="grid h-[60px] shrink-0 grid-cols-[1fr_auto_1fr] items-center bg-[#202020] pl-0.5 text-[15px] leading-5 text-white">
      <button type="button" className="flex items-center gap-[7px] pl-[22px] text-left">
        <svg width="33" height="33" viewBox="0 0 33 33" aria-hidden="true">
          <defs>
            <linearGradient id="moon" x1="0" y1="0" x2="0" y2="1"><stop offset="0" stopColor="#f9c83f" /><stop offset="1" stopColor="#f08a1c" /></linearGradient>
            <linearGradient id="cloud" x1="0" y1="0" x2="0" y2="1"><stop offset="0" stopColor="#cfe0fb" /><stop offset="1" stopColor="#86a9e8" /></linearGradient>
          </defs>
          <path d="M14 2c6 5 5 15-3 17C6 20 2 17 1.500 14 8 16 14 10 14 2z" fill="url(#moon)" />
          <path d="M8 31.500a6.500 6.500 0 0 1-1-13A8.500 8.500 0 0 1 23 17a7.300 7.300 0 1 1 2.500 14.500z" fill="url(#cloud)" />
        </svg>
        <span>
          <span className="block">28°C</span>
          <span className="block text-[#c4c4c4]">Mostly cloudy</span>
        </span>
      </button>
      <div className="flex items-center">
        <Task label="Start">
          <svg width="30" height="30" viewBox="0 0 30 30" aria-hidden="true">
            <defs><linearGradient id="win" x1="0" y1="0" x2="1" y2="1"><stop offset="0" stopColor="#7ff0ff" /><stop offset="1" stopColor="#0a93f5" /></linearGradient></defs>
            <path d="M0 1.500Q0 0 1.500 0h12.700v14.200H0zM15.800 0h12.700Q30 0 30 1.500v12.700H15.800zM0 15.800h14.200V30H1.500Q0 30 0 28.500zM15.800 15.800H30v12.700q0 1.500-1.500 1.500H15.800z" fill="url(#win)" />
          </svg>
        </Task>
        <button type="button" className="mx-1 flex h-10 w-[125px] items-center justify-center gap-1.5 rounded-full border border-[#363636] bg-[#2d2d2d] pl-0.5 text-[14px]">
          <Ic w={18} h={18} color="#fff" sw={1.8}><circle cx="10.500" cy="7.500" r="6" /><path d="M6.500 12 1.500 17" /></Ic>
          Search
        </button>
        <Task label="Task view">
          <svg width="30" height="30" viewBox="0 0 30 30" aria-hidden="true">
            <rect x="0" y="9" width="22" height="20" rx="1.500" fill="#5f5f5f" />
            <rect x="7" y="1" width="23" height="20" rx="1.500" fill="#f2f2f2" />
            <path d="M7 9h15v12H8.500Q7 21 7 19.500z" fill="#b5b5b5" />
          </svg>
        </Task>
        <Task label="File Explorer" dot>
          <svg width="30" height="28" viewBox="0 0 30 28" aria-hidden="true">
            <path d="M0 2Q0 .5 1.500.5h8.500l3 3h15q1.500 0 1.500 1.500v7H0z" fill="#e0a200" />
            <path d="M0 7.500h11l3-3h14.500Q30 4.500 30 6v19.500q0 1.500-1.500 1.500h-27Q0 27 0 25.500z" fill="#ffcf48" />
            <path d="M5.500 27v-5q0-2.500 2.500-2.500h15q2.500 0 2.500 2.500v5z" fill="#0c6cbd" />
            <path d="M9 22.500h13" stroke="#0a3f73" strokeWidth="1.200" />
          </svg>
        </Task>
        <Task label="Visual Studio Code">
          <svg width="30" height="30" viewBox="0 0 30 30" aria-hidden="true">
            <path d="M22 0 0 19.300q-.6.700 0 1.400l1.700 1.500q.7.500 1.400 0L22 8z" fill="#0a7cc4" />
            <path d="M22 30 0 10.700Q-.6 10 0 9.300l1.700-1.500q.7-.5 1.400 0L22 22z" fill="#1183cf" />
            <path d="M22 0l7 3.300q1 .6 1 1.700v20q0 1.100-1 1.700L22 30q-1 .3-1.500-.5.800.3 1.500-.7V1.200Q21.300.2 20.500.5 21-.3 22 0z" fill="#2aa4f0" />
          </svg>
        </Task>
        <Task label="Sublime Text">
          <span className="flex size-[30px] items-center justify-center rounded-[3px] bg-[#484848] text-[#ff9800]"><SiSublimetext size={20} /></span>
        </Task>
        <Task label="Brave" dot>
          <svg width="26" height="30" viewBox="0 0 26 30" aria-hidden="true">
            <defs><linearGradient id="brave" x1="0" y1="0" x2="1" y2="0"><stop offset="0" stopColor="#ff5a1f" /><stop offset="1" stopColor="#ff2a00" /></linearGradient></defs>
            <path d="M8 0h10l2.500 2.800h2.300L25.500 6.500l-.8 2.200.8 2.500-3.200 12q-.5 1.600-2 2.700L14.500 29.500q-1.500.9-3 0L5.700 25.900q-1.500-1.100-2-2.700l-3.200-12 .8-2.500L.5 6.500 3.200 2.800h2.300z" fill="url(#brave)" />
            <path d="M8 4.300l5 .9 5-.9 4.500 5.400-1.200 2.800.5 1.500-3.300 4-.5 2L13 24l-5-4-.5-2-3.300-4 .5-1.500L3.500 9.700z" fill="#fff" />
            <path d="M6.500 10.500 11 12l.3 1.500-1.300 2zM19.500 10.500 15 12l-.3 1.500 1.300 2zM9.500 17.500l3.500-1.500 3.500 1.500-3.500 2.300zM12 7l1 4.500L14 7z" fill="#fb3d0c" />
          </svg>
        </Task>
        <Task label="Notion">
          <svg width="28" height="29" viewBox="0 0 28 29" aria-hidden="true">
            <path d="M2 1.500 20 .5l7 5v20.500q0 1.500-1.500 1.500L8 28.500 1 22.500z" fill="#111" stroke="#ddd" strokeWidth="1" />
            <path d="M4 3 19.500 2l4 3L8 6z" fill="#fff" />
            <path d="M7 9l18-1.200V26L7 27z" fill="#fff" />
            <path d="M10 11h4l6 8.500V12h-1.500v-1.500H24V12h-1.500v12.500H20L13 15v8h2v1.500h-5V23h1.500V12.500H10z" fill="#111" />
          </svg>
        </Task>
        <Task label="Chrome" dot>
          <svg width="30" height="30" viewBox="0 0 30 30" aria-hidden="true">
            <circle cx="15" cy="15" r="15" fill="#ffcd40" />
            <path d="M15 15V8h13.300A15 15 0 0 0 2 7.500l7 11z" fill="#e94335" />
            <path d="M2 7.500A15 15 0 0 0 14.500 30l6.600-11.500L15 15l-6.100 3.500z" fill="#34a353" />
            <circle cx="15" cy="15" r="7" fill="#fff" />
            <circle cx="15" cy="15" r="5.600" fill="#2f7bf0" />
          </svg>
        </Task>
        <Task label="Excel" active><ExcelIcon s={29} /></Task>
      </div>
      <div className="flex items-center justify-end pr-6">
        <Btn label="Hidden icons"><Ic w={16} h={10} color="#fff" sw={1.5}><path d="m1 9 7-7.500L15 9" /></Ic></Btn>
        <Btn label="Updates" className="ml-3">
          <Ic w={21} h={22} color="#eee" sw={1.6}>
            <path d="M2 9C3 4.500 6 2 10 2c3 0 6 1.500 7.500 4.500M18.500 2v5.500h-5M7 20c-2-1-3.500-2.500-4.500-4.500M1.500 20.500V15H7" />
            <circle cx="15" cy="15.500" r="5.500" fill="#ff9800" stroke="none" />
          </Ic>
        </Btn>
        <button type="button" className="ml-4 w-8 text-center">ENG<br />IN</button>
        <Btn label="Network, sound and battery" className="ml-5 gap-[11px]">
          <Ic w={20} h={18} color="#fff" sw={1.6}>
            <path d="M1 7c5-6.500 13-6.500 18 0M4 10c3.500-4.500 8.500-4.500 12 0M6.800 13c2-2.500 4.400-2.500 6.400 0" />
            <circle cx="10" cy="15.500" r="1.500" fill="#fff" stroke="none" />
          </Ic>
          <Ic w={20} h={18} color="#fff" sw={1.5}><path d="M1 6.500h3L9 2v14l-5-4.500H1zM13 6.500l5.500 5.500M18.500 6.500 13 12" /></Ic>
          <Ic w={21} h={18} color="#fff" sw={1.6}>
            <path d="M8 3h9.500v12H6v-4M20 7v4" />
            <path d="M9.500 6h5.500v6H8.500V9z" fill="#fff" stroke="none" />
            <path d="M3 0v3M7 0v3M1.500 3.500h7V6L6.500 8H5v4H5V8H3.500l-2-2z" fill="#fff" strokeWidth="1.200" />
          </Ic>
        </Btn>
        <button type="button" className="ml-3 w-20 text-right">22:15<br />15-03-2023</button>
        <span className="ml-2.5 flex size-5 items-center justify-center rounded-full bg-[#d89ae8] text-[12px] text-black">1</span>
      </div>
    </div>
  );
}

export default function App() {
  return (
    <div className="flex h-screen flex-col overflow-hidden bg-[#efefef] font-['Open_Sans','Noto_Sans',sans-serif]">
      <TitleBar />
      <Tabs />
      <Ribbon />
      <FormulaBar />
      <Grid />
      <SheetTabs />
      <StatusBar />
      <Taskbar />
    </div>
  );
}
